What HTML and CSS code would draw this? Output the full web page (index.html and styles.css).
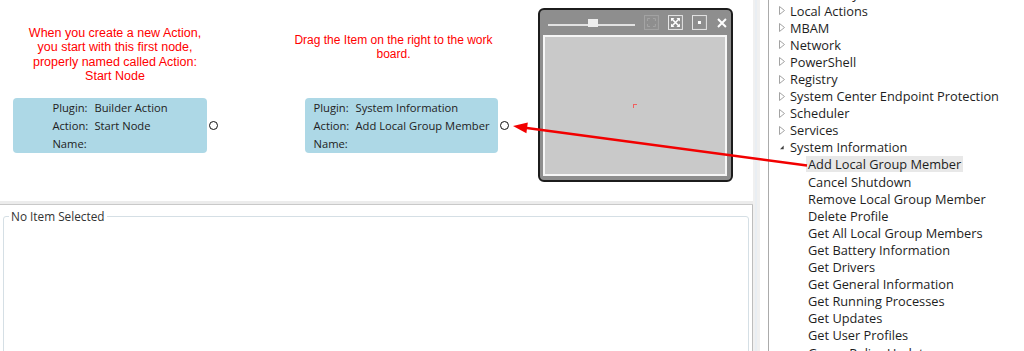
FILE: index.html
```html
<!DOCTYPE html>
<html lang="en">

<head>
    <meta charset="UTF-8">
    <title>Action Builder</title>
    <link rel="stylesheet" href="styles.css">
</head>

<body>
    <svg width="0" height="0" class="defs">
        <symbol id="collapsed" viewBox="0 0 6 9">
            <path d="M0.5 0.5 L5.5 4.5 L0.5 8.5 Z" fill="none" stroke="#a3a3a3" stroke-width="1"/>
        </symbol>
    </svg>

    <div class="app">
        <div class="main">
            <div class="board">
                <div class="note note-start">When you create a new Action,<br>you start with this first node,<br>properly named called Action:<br>Start Node</div>
                <div class="note note-drag">Drag the Item on the right to the work board.</div>

                <div class="node node-start">
                    <div class="fields">
                        <span class="label">Plugin:</span><span>Builder Action</span>
                        <span class="label">Action:</span><span>Start Node</span>
                        <span class="label">Name:</span><span></span>
                    </div>
                    <span class="port"></span>
                </div>

                <div class="node node-new">
                    <div class="fields">
                        <span class="label">Plugin:</span><span>System Information</span>
                        <span class="label">Action:</span><span>Add Local Group Member</span>
                        <span class="label">Name:</span><span></span>
                    </div>
                    <span class="port"></span>
                </div>

                <div class="minimap">
                    <div class="mini-bar">
                        <div class="zoom-slider"><span class="thumb"></span></div>
                        <svg class="mini-btn disabled" width="15" height="15" viewBox="0 0 15 15">
                            <rect x="0.5" y="0.5" width="14" height="14" fill="none" stroke="#a4a4a4"/>
                            <path d="M3.5 6 V3.5 H6 M9 3.5 H11.5 V6 M11.5 9 V11.5 H9 M6 11.5 H3.5 V9" fill="none" stroke="#a4a4a4"/>
                        </svg>
                        <svg class="mini-btn" width="15" height="15" viewBox="0 0 15 15">
                            <rect x="0.5" y="0.5" width="14" height="14" fill="none" stroke="#e6e6e6"/>
                            <path d="M4 4 L11 11 M11 4 L4 11" stroke="#fff" stroke-width="1.6"/>
                            <path d="M3 3 H6.5 L3 6.5 Z M12 3 V6.5 L8.5 3 Z M12 12 H8.5 L12 8.5 Z M3 12 V8.5 L6.5 12 Z" fill="#fff"/>
                        </svg>
                        <svg class="mini-btn" width="15" height="15" viewBox="0 0 15 15">
                            <rect x="0.5" y="0.5" width="14" height="14" fill="none" stroke="#e6e6e6"/>
                            <rect x="6" y="6" width="3" height="3" fill="#fff"/>
                        </svg>
                        <svg class="mini-close" width="10" height="10" viewBox="0 0 10 10">
                            <path d="M1 1 L9 9 M9 1 L1 9" stroke="#fff" stroke-width="2"/>
                        </svg>
                    </div>
                    <div class="mini-view"><span class="mini-mark"></span></div>
                </div>
            </div>
            <div class="hsplit"></div>
            <div class="details">
                <fieldset class="group">
                    <legend>No Item Selected</legend>
                </fieldset>
            </div>
        </div>

        <div class="vsplit"></div>
        <div class="gap"></div>

        <div class="tree">
            <div class="row"><svg class="exp"><use href="#collapsed"/></svg><span class="text">Local Policy</span></div>
            <div class="row"><svg class="exp"><use href="#collapsed"/></svg><span class="text">Local Actions</span></div>
            <div class="row"><svg class="exp"><use href="#collapsed"/></svg><span class="text">MBAM</span></div>
            <div class="row"><svg class="exp"><use href="#collapsed"/></svg><span class="text">Network</span></div>
            <div class="row"><svg class="exp"><use href="#collapsed"/></svg><span class="text">PowerShell</span></div>
            <div class="row"><svg class="exp"><use href="#collapsed"/></svg><span class="text">Registry</span></div>
            <div class="row"><svg class="exp"><use href="#collapsed"/></svg><span class="text">System Center Endpoint Protection</span></div>
            <div class="row"><svg class="exp"><use href="#collapsed"/></svg><span class="text">Scheduler</span></div>
            <div class="row"><svg class="exp"><use href="#collapsed"/></svg><span class="text">Services</span></div>
            <div class="row"><svg class="exp" viewBox="0 0 9 9"><path d="M7 1.5 V7 H1.5 Z" fill="#404040"/></svg><span class="text">System Information</span></div>
            <div class="row child"><span class="text selected">Add Local Group Member</span></div>
            <div class="row child"><span class="text">Cancel Shutdown</span></div>
            <div class="row child"><span class="text">Remove Local Group Member</span></div>
            <div class="row child"><span class="text">Delete Profile</span></div>
            <div class="row child"><span class="text">Get All Local Group Members</span></div>
            <div class="row child"><span class="text">Get Battery Information</span></div>
            <div class="row child"><span class="text">Get Drivers</span></div>
            <div class="row child"><span class="text">Get General Information</span></div>
            <div class="row child"><span class="text">Get Running Processes</span></div>
            <div class="row child"><span class="text">Get Updates</span></div>
            <div class="row child"><span class="text">Get User Profiles</span></div>
            <div class="row child"><span class="text">Group Policy Update</span></div>
        </div>
    </div>

    <!-- drag hint arrow, drawn over both panes -->
    <svg class="arrow" width="1024" height="351" viewBox="0 0 1024 351">
        <line x1="807" y1="165.5" x2="525" y2="127.7" stroke="#f20000" stroke-width="2.5"/>
        <polygon points="513,126 527.8,122.6 526.4,133.2" fill="#f20000"/>
    </svg>
</body>

</html>
```

FILE: styles.css
```css
body {
    margin: 0;
    width: 1024px;
    height: 351px;
    overflow: hidden;
    position: relative;
    background-color: white;
    font-family: 'Open Sans', sans-serif;
    color: #1e1e1e;
}

.defs {
    position: absolute;
}

.app {
    display: flex;
    height: 100%;
}

.main {
    width: 753px;
    display: flex;
    flex-direction: column;
}

.board {
    height: 201px;
    flex-shrink: 0;
    position: relative;
}

.note {
    position: absolute;
    font-family: 'Liberation Sans', Arial, sans-serif;
    color: #ff0000;
    text-align: center;
}

.note-start {
    left: 15px;
    top: 26px;
    width: 200px;
    font-size: 12.5px;
    line-height: 14.4px;
}

.note-drag {
    left: 283px;
    top: 33px;
    width: 221px;
    font-size: 12px;
    line-height: 14px;
}

.node {
    position: absolute;
    top: 98px;
    height: 55px;
    background-color: #add8e6;
    border-radius: 4px;
    display: flex;
    justify-content: center;
    font-size: 11.2px;
    color: #222;
}

.node-start {
    left: 13px;
    width: 194px;
}

.node-new {
    left: 305px;
    width: 193px;
}

.fields {
    display: grid;
    grid-template-columns: 42px auto;
    grid-auto-rows: 18px;
    align-items: center;
    white-space: nowrap;
}

.port {
    position: absolute;
    left: calc(100% + 1.5px);
    top: 23px;
    width: 7px;
    height: 7px;
    border: 1.3px solid #111;
    border-radius: 50%;
    background-color: white;
}

/* navigator window */
.minimap {
    position: absolute;
    left: 538px;
    top: 8px;
    width: 195px;
    height: 174px;
    box-sizing: border-box;
    border: 2px solid #1c1c1c;
    border-radius: 6px;
    background-color: #8e8e8e;
    padding: 0 4px 4px 3px;
    display: flex;
    flex-direction: column;
}

.mini-bar {
    height: 25px;
    display: flex;
    align-items: center;
}

.zoom-slider {
    position: relative;
    width: 88px;
    height: 8px;
    margin: 1px 9px 0 5px;
}

.zoom-slider::before {
    content: '';
    position: absolute;
    left: 0;
    right: 0;
    top: 5px;
    height: 2px;
    background-color: #e2e2e2;
}

.thumb {
    position: absolute;
    left: 40px;
    top: 0;
    width: 10px;
    height: 8px;
    background-color: #ededed;
}

.mini-btn {
    margin-right: 9px;
}

.mini-close {
    margin-left: 1px;
}

.mini-view {
    flex: 1;
    position: relative;
    border: 2px solid #f6f6f6;
    background-color: #c9c9c9;
}

.mini-mark {
    position: absolute;
    left: 88px;
    top: 67px;
    width: 3px;
    height: 3px;
    border-top: 1px solid #f06060;
    border-left: 1px solid #f06060;
}

.hsplit {
    height: 3px;
    flex-shrink: 0;
    background-color: #ececec;
    border-bottom: 1px solid #c9c9c9;
}

.details {
    flex: 1;
    min-height: 0;
    overflow: hidden;
    border-right: 1px solid #bdbdbd;
}

.group {
    margin: 3px 3px 0 3px;
    padding: 0 5px;
    height: 200px;
    border: 1px solid #d5dfe5;
    border-radius: 3px;
}

.group legend {
    padding: 0 2px;
    font-size: 11.8px;
    line-height: 16px;
    color: #333;
}

.vsplit {
    width: 7px;
    background: linear-gradient(to right, #f0f0f0 0, #f0f0f0 2px, #e9eef3 2px, #e9eef3 4px, #f0f0f0 4px);
}

.gap {
    width: 8px;
}

.tree {
    flex: 1;
    border-left: 1px solid #ababab;
    padding-left: 10px;
    margin-top: -15px;
    font-size: 12.8px;
    white-space: nowrap;
}

.row {
    height: 17.1px;
    display: flex;
    align-items: center;
}

.exp {
    width: 6px;
    height: 9px;
    margin-right: 3px;
}

.row .text {
    padding: 0 2px;
    line-height: 16px;
}

.child {
    padding-left: 27px;
}

.selected {
    background-color: #e8e8e8;
}

.arrow {
    position: absolute;
    left: 0;
    top: 0;
    pointer-events: none;
}
```
